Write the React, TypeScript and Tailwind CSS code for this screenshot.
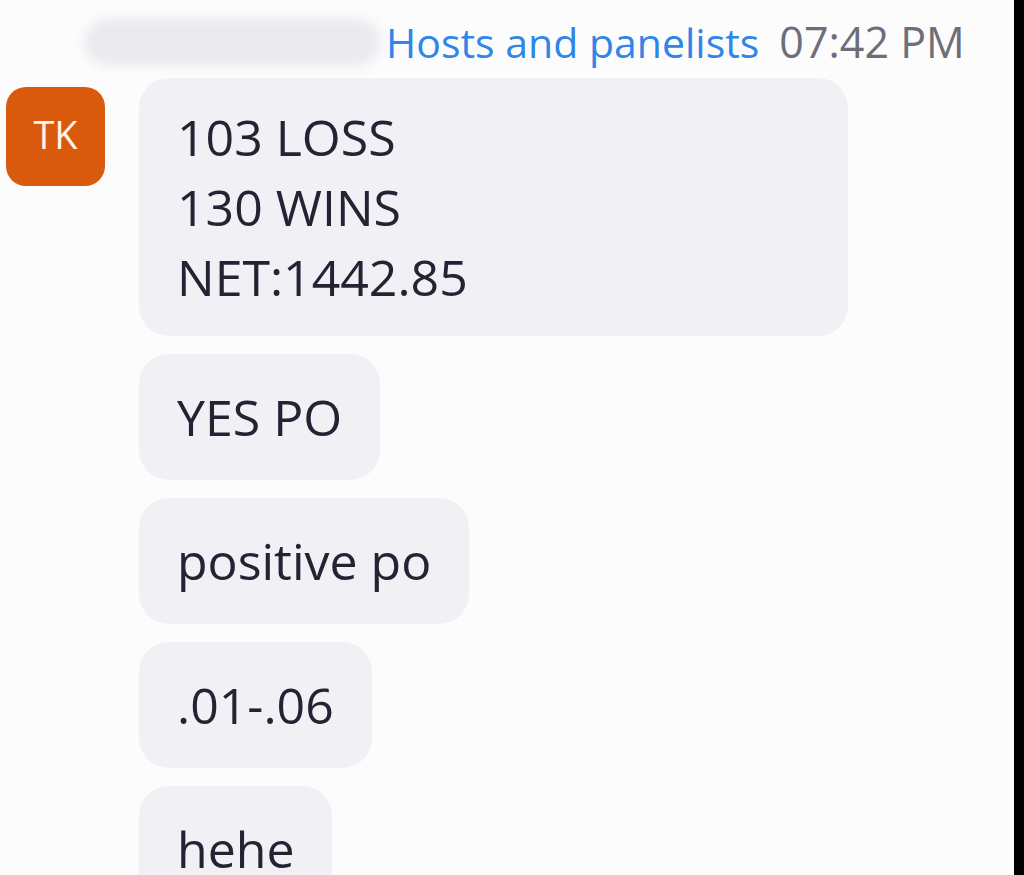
import React from 'react';

const messages = ['YES PO', 'positive po', '.01-.06', 'hehe'];

export default function App() {
  return (
    <div className="flex h-[875px] w-[1024px] overflow-hidden bg-[#fcfcfd] font-['Open_Sans',sans-serif] text-[#232333]">
      <div className="flex-1">
        {/* Header */}
        <div className="flex items-center pl-[85px] pt-[16px]">
          <div className="h-[46px] w-[295px] rounded-full bg-[#e9e9ee] blur-[6px]" />
          <span className="ml-[6px] text-[41px] leading-[52px] text-[#2f86e8]">Hosts and panelists</span>
          <span className="ml-[20px] text-[43px] leading-[52px] text-[#6e6e78]">07:42 PM</span>
        </div>

        {/* Message group */}
        <div className="mt-[10px] flex items-start">
          <div className="ml-[6px] mt-[9px] flex h-[99px] w-[99px] items-center justify-center rounded-[20px] bg-[#d95a0c] pb-[4px] text-[38px] text-[#fff3e8]">
            TK
          </div>
          <div className="ml-[34px] flex flex-col items-start gap-[18px] text-[50px] leading-[70px]">
            <div className="w-[709px] rounded-[30px] bg-[#f0f0f5] px-[38px] py-[24px]">
              <div>103 LOSS</div>
              <div>130 WINS</div>
              <div>NET:1442.85</div>
            </div>
            {messages.map((m) => (
              <div key={m} className="rounded-[30px] bg-[#f0f0f5] px-[38px] py-[28px]">
                {m}
              </div>
            ))}
          </div>
        </div>
      </div>
      <div className="w-[10px] bg-black" />
    </div>
  );
}
